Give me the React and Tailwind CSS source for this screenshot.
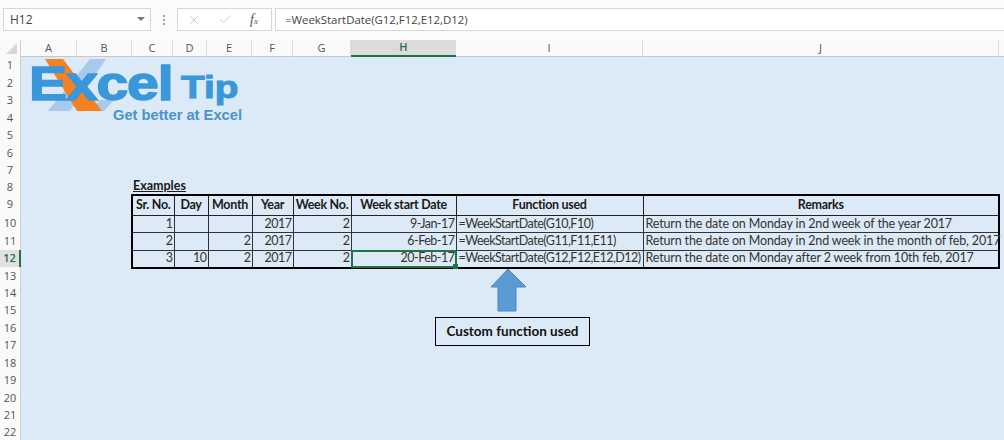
import React from 'react';
import { Check, X } from 'lucide-react';

const COLUMNS = [
  ['A', 56], ['B', 55], ['C', 41], ['D', 34], ['E', 45], ['F', 41], ['G', 58], ['H', 105], ['I', 187], ['J', 356],
];

const TABLE_COLS = [42, 34, 44, 41, 58, 105, 187, 356];

const ROW_HEIGHTS = { 8: 15.5, 9: 20, 10: 17.5, 11: 17.5, 12: 17.5 };

const HEADERS = ['Sr. No.', 'Day', 'Month', 'Year', 'Week No.', 'Week start Date', 'Function used', 'Remarks'];

const ROWS = [
  ['1', '', '', '2017', '2', '9-Jan-17', '=WeekStartDate(G10,F10)', 'Return the date on Monday in 2nd week of the year 2017'],
  ['2', '', '2', '2017', '2', '6-Feb-17', '=WeekStartDate(G11,F11,E11)', 'Return the date on Monday in 2nd week in the month of feb, 2017'],
  ['3', '10', '2', '2017', '2', '20-Feb-17', '=WeekStartDate(G12,F12,E12,D12)', 'Return the date on Monday after 2 week from 10th feb, 2017'],
];

const Logo = () => (
  <div className="absolute left-[7px] top-[1px] h-[72px] w-[225px]">
    <svg className="absolute left-0 top-0" width="100" height="56" viewBox="0 0 100 56">
      <polygon points="62,1 78,1 42,53 20,53" fill="#a9c9ea" />
      <polygon points="72,42 86,42 76,53 62,53" fill="#a9c9ea" />
      <polygon points="17,1 35,1 74,53 49,53" fill="#f58220" />
    </svg>
    <div className="absolute left-[1px] top-[1px] origin-left scale-x-[1.19] font-['Liberation_Sans'] text-[48px] font-bold leading-[50px] tracking-[-1px] text-[#3a97d9] [-webkit-text-stroke:1.5px_#3a97d9]">
      Excel
    </div>
    <div className="absolute left-[153px] top-[10px] origin-left scale-x-[1.25] font-['Liberation_Sans'] text-[31px] font-bold leading-[40px] text-[#3a97d9] [-webkit-text-stroke:1px_#3a97d9]">
      Tip
    </div>
    <div className="absolute left-[85px] top-[48px] whitespace-nowrap font-['Liberation_Sans'] text-[14.7px] font-bold leading-[18px] text-[#4a94ca]">
      Get better at Excel
    </div>
  </div>
);

const FormulaBar = () => (
  <div className="flex h-[40px] items-start bg-[#fbfbfb] pl-[3px] pt-[8px] font-['Open_Sans',sans-serif] text-[12px] text-[#444444]">
    <div className="flex h-[23px] w-[148px] items-center justify-between border border-[#d6d6d6] bg-white pl-[6px] pr-[5px]">
      <span>H12</span>
      <span className="mb-[1px] h-0 w-0 border-x-[4px] border-t-[4px] border-x-transparent border-t-[#777777]" />
    </div>
    <div className="flex w-[26px] flex-col items-center gap-[2px] pt-[7px]">
      <span className="h-[2px] w-[2px] bg-[#a5a5a5]" />
      <span className="h-[2px] w-[2px] bg-[#a5a5a5]" />
      <span className="h-[2px] w-[2px] bg-[#a5a5a5]" />
    </div>
    <div className="flex h-[23px] w-[95px] items-center border border-[#d6d6d6] bg-white pl-[9px]">
      <X size={14} strokeWidth={1.5} className="text-[#c4c4c4]" />
      <Check size={15} strokeWidth={1.5} className="ml-[17px] text-[#c4c4c4]" />
      <span className="ml-[17px] font-['Liberation_Serif',serif] text-[14px] italic leading-none text-[#555555]">
        f<span className="text-[9px]">x</span>
      </span>
    </div>
    <div className="ml-[3px] flex h-[23px] flex-1 items-center border border-r-0 border-[#d6d6d6] bg-white pl-[9px] text-[11.4px]">
      =WeekStartDate(G12,F12,E12,D12)
    </div>
  </div>
);

const ColumnHeaders = () => (
  <div className="flex h-[17px] bg-[#fafafa] font-['Open_Sans',sans-serif] text-[11px] text-[#555555]">
    <div className="flex w-[21px] items-end justify-end border-r border-[#d0d0d0] pb-[3px] pr-[3px]">
      <svg width="11" height="11" viewBox="0 0 11 11">
        <polygon points="11,0 11,11 0,11" fill="#d8d8d8" />
      </svg>
    </div>
    {COLUMNS.map(([name, width]) => (
      <div
        key={name}
        style={{ width }}
        className={
          name === 'H'
            ? 'flex items-center justify-center border-b-2 border-[#217346] bg-[#dcdcdc] font-semibold text-[#217346]'
            : 'flex items-center justify-center border-r border-b border-[#dcdcdc] border-b-[#c8c8c8]'
        }
      >
        {name}
      </div>
    ))}
    <div className="flex-1 border-b border-[#c8c8c8]" />
  </div>
);

const RowHeaders = () => (
  <div className="flex w-[21px] shrink-0 flex-col bg-[#fafafa] font-['Open_Sans',sans-serif] text-[11px] text-[#555555]">
    {Array.from({ length: 22 }, (_, i) => i + 1).map((n) => (
      <div
        key={n}
        style={{ height: ROW_HEIGHTS[n] || 17.45 }}
        className={
          n === 12
            ? 'flex shrink-0 items-center justify-center border-r-2 border-[#217346] bg-[#e1e1e1] font-semibold text-[#217346]'
            : 'flex shrink-0 items-center justify-center border-r border-[#cfcfcf]'
        }
      >
        {n}
      </div>
    ))}
  </div>
);

const ExamplesTable = () => (
  <table className="w-[867px] table-fixed border-collapse border-2 border-black font-['Lato',sans-serif] text-[12.5px] leading-none text-[#333333]">
    <colgroup>
      {TABLE_COLS.map((width, i) => (
        <col key={i} style={{ width }} />
      ))}
    </colgroup>
    <thead>
      <tr className="h-[20px]">
        {HEADERS.map((label) => (
          <th key={label} className="overflow-hidden whitespace-nowrap border border-[#222222] p-0 text-center font-bold tracking-[-0.3px] text-[#1a1a1a]">
            {label}
          </th>
        ))}
      </tr>
    </thead>
    <tbody>
      {ROWS.map((row, r) => (
        <tr key={row[0]} className="h-[17.5px]">
          {row.map((cell, c) => {
            const selected = r === 2 && c === 5;
            let align = 'pr-[1px] text-right tracking-[-0.5px]';
            if (c === 6) align = 'pl-[2px] text-left tracking-[-0.5px]';
            if (c === 7) align = 'pl-[2px] text-left tracking-[-0.15px]';
            return (
              <td key={c} className={'relative whitespace-nowrap border border-[#333333] p-0 ' + align}>
                {cell}
                {selected && (
                  <span className="absolute -inset-[1px] border-2 border-[#217346]">
                    <span className="absolute -bottom-[3px] -right-[3px] h-[5px] w-[5px] bg-[#217346]" />
                  </span>
                )}
              </td>
            );
          })}
        </tr>
      ))}
    </tbody>
  </table>
);

const Callout = () => (
  <>
    <svg className="absolute left-[469px] top-[211px]" width="38" height="46" viewBox="0 0 38 46">
      <polygon points="18,1 36,19 26,19 26,43 8,43 8,19 1,19" fill="#5b9bd5" stroke="#4a86bd" />
    </svg>
    <div className="absolute left-[414px] top-[260px] flex h-[29px] w-[155px] items-center justify-center border border-black font-['Lato',sans-serif] text-[13.5px] font-bold text-[#111111]">
      Custom function used
    </div>
  </>
);

export default function App() {
  return (
    <div className="h-[440px] w-[1004px] overflow-hidden bg-white">
      <FormulaBar />
      <ColumnHeaders />
      <div className="flex h-[383px] overflow-hidden">
        <RowHeaders />
        <div className="relative flex-1 bg-[#dce9f6] pl-[110px] pt-[122px]">
          <Logo />
          <div className="h-[15px] pl-[2px] font-['Lato',sans-serif] text-[12.5px] font-bold leading-[13px] text-[#1a1a1a] underline">Examples</div>
          <ExamplesTable />
          <Callout />
        </div>
      </div>
    </div>
  );
}
